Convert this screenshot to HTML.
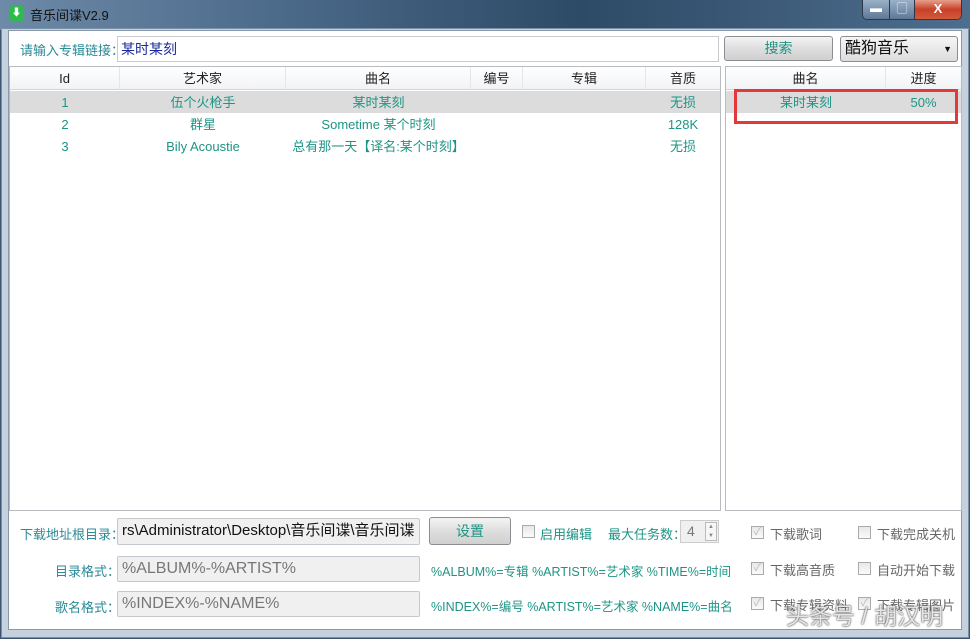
<!DOCTYPE html>
<html><head><meta charset="utf-8"><style>
*{margin:0;padding:0;box-sizing:border-box}
html,body{width:970px;height:639px;overflow:hidden}
body{position:relative;font-family:"Liberation Sans","Noto Sans CJK SC",sans-serif;font-size:13px;background:#3a5570}
.abs{position:absolute;white-space:nowrap}
.t{color:#1e9485}
.lbl{color:#2a8a96;font-size:13px}
.hdr{position:absolute;top:0;height:23px;line-height:23px;text-align:center;color:#222;font-size:13px;border-right:1px solid #e4e6ea;}
.cell{position:absolute;text-align:center;color:#1e9485;font-size:13px;height:22px;line-height:22px;white-space:nowrap}
.inp{position:absolute;border:1px solid #c4c8cc;background:#f0f0f0;color:#777;font-size:16px;line-height:24px;padding-left:4px;border-radius:2px;white-space:nowrap;overflow:hidden}
.btn{position:absolute;border:1px solid #8a8e92;border-radius:3px;background:linear-gradient(#f4f4f4,#dedede 50%,#d0d0d0);text-align:center;color:#1e9485;font-size:14px}
.cb{position:absolute;width:13px;height:13px;border:1px solid #aaa;background:linear-gradient(#e8e8e8,#fafafa)}
.cbt{position:absolute;color:#666;font-size:13px;white-space:nowrap}
.chk{color:#bbb;font-size:11px;line-height:11px;text-align:center}
</style></head><body>
<div class="abs" style="left:0;top:0;width:970px;height:30px;background:linear-gradient(90deg,#6d8aa8,#4a6888 30%,#2d4a66 60%,#4e6e8e)"></div>
<div class="abs" style="left:9px;top:6px;width:15px;height:15px;background:#2dbb4e;border-radius:3px;color:#fff;font-size:10px;text-align:center;line-height:15px">⬇</div>
<div class="abs" style="left:30px;top:5px;color:#111;font-size:13px">音乐间谍V2.9</div>
<div class="abs" style="left:862px;top:0;width:100px;height:20px;border:1px solid #2a3a4a;border-top:none;border-radius:0 0 5px 5px;overflow:hidden;display:flex">
<div style="width:27px;background:linear-gradient(#9ab0c8,#5d7896);border-right:1px solid #334;color:#fff;text-align:center;font-size:12px;line-height:16px">▬</div>
<div style="width:25px;background:linear-gradient(#9ab0c8,#5d7896);border-right:1px solid #334;color:#fff;text-align:center;font-size:11px;line-height:18px">▢</div>
<div style="flex:1;background:linear-gradient(#e6a08a,#c8402a 50%,#d25a3a);color:#fff;text-align:center;font-weight:bold;font-size:13px;line-height:18px">X</div>
</div>
<div class="abs" style="left:1px;top:28px;width:968px;height:610px;background:#c5d2de;border:1px solid #7890a8"></div>
<div class="abs" style="left:8px;top:30px;width:954px;height:600px;background:#fff;border:1px solid #8899aa"></div>

<div class="abs lbl" style="left:20px;top:40px">请输入专辑链接：</div>
<div class="abs" style="left:117px;top:36px;width:602px;height:26px;border:1px solid #c8ccd0;color:#1a2a9a;font-size:14px;line-height:24px;padding-left:3px">某时某刻</div>
<div class="btn" style="left:724px;top:36px;width:109px;height:25px;line-height:23px">搜索</div>
<div class="abs" style="left:840px;top:36px;width:118px;height:26px;border:1px solid #8a8e92;border-radius:3px;background:linear-gradient(#f6f6f6,#dcdcdc);font-size:16px;line-height:24px;padding-left:4px;color:#111">酷狗音乐<span style="position:absolute;right:5px;font-size:9px">▼</span></div>

<div class="abs" style="left:9px;top:66px;width:712px;height:445px;border:1px solid #b8bcc0;background:#fff">
<div class="abs" style="left:0;top:0;width:710px;height:23px;background:linear-gradient(#fff,#f2f3f5);border-bottom:1px solid #d5d5d5"></div>
<div class="hdr" style="left:0;width:110px">Id</div>
<div class="hdr" style="left:110px;width:166px">艺术家</div>
<div class="hdr" style="left:276px;width:185px">曲名</div>
<div class="hdr" style="left:461px;width:52px">编号</div>
<div class="hdr" style="left:513px;width:123px">专辑</div>
<div class="hdr" style="left:636px;width:74px;border:none">音质</div>
<div class="abs" style="left:0;top:24px;width:710px;height:22px;background:#dcdcdc"></div>
<div class="cell" style="left:0;top:25px;width:110px">1</div><div class="cell" style="left:110px;top:25px;width:166px">伍个火枪手</div><div class="cell" style="left:276px;top:25px;width:185px">某时某刻</div><div class="cell" style="left:636px;top:25px;width:74px">无损</div>
<div class="cell" style="left:0;top:47px;width:110px">2</div><div class="cell" style="left:110px;top:47px;width:166px">群星</div><div class="cell" style="left:276px;top:47px;width:185px">Sometime 某个时刻</div><div class="cell" style="left:636px;top:47px;width:74px">128K</div>
<div class="cell" style="left:0;top:69px;width:110px">3</div><div class="cell" style="left:110px;top:69px;width:166px">Bily Acoustie</div><div class="cell" style="left:266px;top:69px;width:205px">总有那一天【译名:某个时刻】</div><div class="cell" style="left:636px;top:69px;width:74px">无损</div>
</div>

<div class="abs" style="left:725px;top:66px;width:237px;height:445px;border:1px solid #b8bcc0;background:#fff">
<div class="abs" style="left:0;top:0;width:235px;height:23px;background:linear-gradient(#fff,#f2f3f5);border-bottom:1px solid #d5d5d5"></div>
<div class="hdr" style="left:0;width:160px">曲名</div>
<div class="hdr" style="left:160px;width:75px;border:none">进度</div>
<div class="abs" style="left:0;top:24px;width:235px;height:22px;background:#dcdcdc"></div>
<div class="cell" style="left:0;top:25px;width:160px">某时某刻</div><div class="cell" style="left:160px;top:25px;width:75px">50%</div>
</div>
<div class="abs" style="left:734px;top:89px;width:224px;height:35px;border:3px solid #e23a3a"></div>

<div class="abs lbl" style="left:20px;top:524px">下载地址根目录：</div>
<div class="inp" style="left:117px;top:518px;width:303px;height:27px;color:#111;font-size:15px">rs\Administrator\Desktop\音乐间谍\音乐间谍</div>
<div class="btn" style="left:429px;top:517px;width:82px;height:28px;line-height:26px">设置</div>
<div class="cb" style="left:522px;top:525px"></div><div class="abs t" style="left:540px;top:524px">启用编辑</div>
<div class="abs t" style="left:608px;top:524px">最大任务数：</div>
<div class="abs" style="left:680px;top:520px;width:39px;height:23px;border:1px solid #ccc;background:#f0f0f0;color:#777;font-size:14px;line-height:21px;padding-left:6px">4<div style="position:absolute;right:1px;top:1px;width:12px;height:19px;border:1px solid #bbb;background:#f6f6f6;font-size:6px;line-height:9px;text-align:center;color:#888">▲<br>▼</div></div>
<div class="abs lbl" style="left:55px;top:561px">目录格式：</div>
<div class="inp" style="left:117px;top:556px;width:303px;height:26px">%ALBUM%-%ARTIST%</div>
<div class="abs t" style="left:431px;top:561px;font-size:12.5px">%ALBUM%=专辑 %ARTIST%=艺术家 %TIME%=时间</div>
<div class="abs lbl" style="left:55px;top:597px">歌名格式：</div>
<div class="inp" style="left:117px;top:591px;width:303px;height:26px">%INDEX%-%NAME%</div>
<div class="abs t" style="left:431px;top:596px;font-size:12.5px">%INDEX%=编号 %ARTIST%=艺术家 %NAME%=曲名</div>

<div class="cb chk" style="left:751px;top:526px">✓</div><div class="cbt" style="left:770px;top:524px">下载歌词</div>
<div class="cb" style="left:858px;top:526px"></div><div class="cbt" style="left:877px;top:524px">下载完成关机</div>
<div class="cb chk" style="left:751px;top:562px">✓</div><div class="cbt" style="left:770px;top:560px">下载高音质</div>
<div class="cb" style="left:858px;top:562px"></div><div class="cbt" style="left:877px;top:560px">自动开始下载</div>
<div class="cb chk" style="left:751px;top:597px">✓</div><div class="cbt" style="left:770px;top:595px">下载专辑资料</div>
<div class="cb chk" style="left:858px;top:597px">✓</div><div class="cbt" style="left:877px;top:595px">下载专辑图片</div>
<div class="abs" style="left:786px;top:602px;font-size:23px;line-height:28px;color:rgba(255,255,255,0.85);text-shadow:0 0 2px #555,0 0 1px #333">头条号 / 胡汉明</div>
</body></html>
